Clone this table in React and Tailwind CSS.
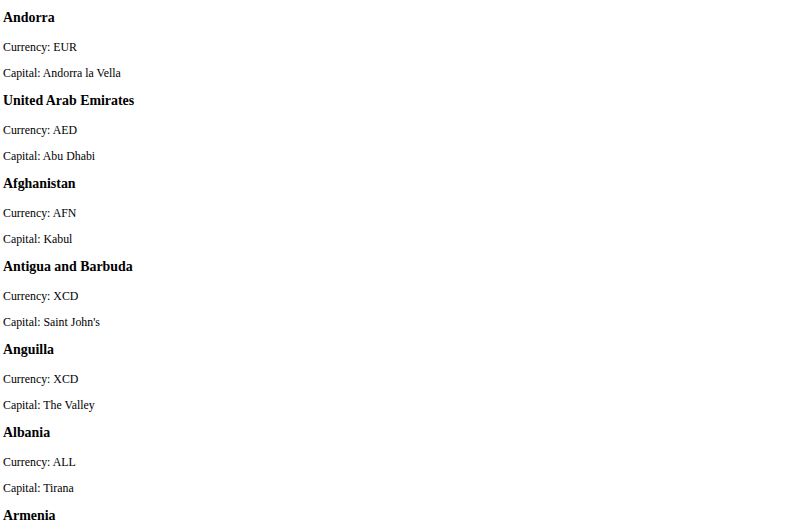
import React from 'react';

const countries = [
  { name: 'Andorra', currency: 'EUR', capital: 'Andorra la Vella' },
  { name: 'United Arab Emirates', currency: 'AED', capital: 'Abu Dhabi' },
  { name: 'Afghanistan', currency: 'AFN', capital: 'Kabul' },
  { name: 'Antigua and Barbuda', currency: 'XCD', capital: "Saint John's" },
  { name: 'Anguilla', currency: 'XCD', capital: 'The Valley' },
  { name: 'Albania', currency: 'ALL', capital: 'Tirana' },
];

function App() {
  return (
    <div className="flex flex-col pl-[3px] pt-[10px] bg-white text-black font-['Liberation_Serif','Times_New_Roman',serif]">
      {countries.map(({ name, currency, capital }, i) => (
        <div key={name} className={i ? 'mt-[13px]' : ''}>
          <h3 className="text-[13.9px] leading-[16px] font-bold">{name}</h3>
          <p className="mt-[14px] text-[11.85px] leading-[14px]">Currency: {currency}</p>
          <p className="mt-[12px] text-[11.85px] leading-[14px]">Capital: {capital}</p>
        </div>
      ))}
      {/* last entry, only its heading fits in view */}
      <h3 className="mt-[13px] text-[13.9px] leading-[16px] font-bold">Armenia</h3>
    </div>
  );
}

export default App;
